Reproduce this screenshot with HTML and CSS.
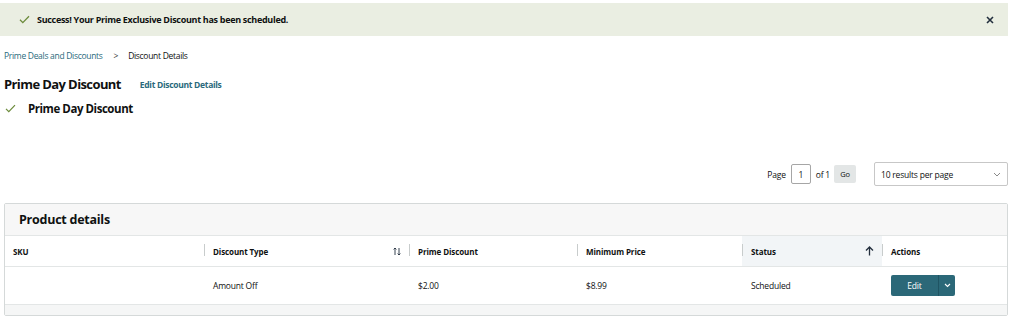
FILE: index.html
```html
<!DOCTYPE html>
<html>
<head>
    <title>Discount Details</title>
    <link rel="stylesheet" href="styles.css">
</head>
<body>
    <div class="alert">
        <svg class="alert-check" width="11" height="9" viewBox="0 0 11 9"><path d="M1 4.8 L3.8 7.6 L10 1.2" fill="none" stroke="#6b8a3a" stroke-width="1.3"/></svg>
        <span class="alert-text">Success! Your Prime Exclusive Discount has been scheduled.</span>
        <svg class="alert-close" width="8" height="8" viewBox="0 0 8 8"><path d="M1 1 L7 7 M7 1 L1 7" stroke="#232f3e" stroke-width="1.6"/></svg>
    </div>

    <div class="page">
        <div class="crumbs">
            <a class="crumb-link">Prime Deals and Discounts</a>
            <span class="crumb-sep">&gt;</span>
            <span>Discount Details</span>
        </div>

        <div class="title-row">
            <h1>Prime Day Discount</h1>
            <a class="edit-link">Edit Discount Details</a>
        </div>

        <div class="sub-row">
            <svg width="11" height="9" viewBox="0 0 11 9"><path d="M1 4.8 L3.8 7.6 L10 1.2" fill="none" stroke="#6b8a3a" stroke-width="1.2"/></svg>
            <span>Prime Day Discount</span>
        </div>

        <div class="pager">
            <span>Page</span>
            <span class="page-box">1</span>
            <span>of 1</span>
            <span class="go-btn">Go</span>
            <div class="per-page">
                <span>10 results per page</span>
                <svg width="8" height="5" viewBox="0 0 8 5"><path d="M1 1 L4 4 L7 1" fill="none" stroke="#8a8a8a" stroke-width="1"/></svg>
            </div>
        </div>

        <div class="card">
            <div class="card-head">Product details</div>
            <div class="grid head-row">
                <div class="cell">SKU</div>
                <div class="cell sep">Discount Type
                    <svg class="sort" width="8" height="9" viewBox="0 0 8 9"><path d="M2 8 V1 M0.6 2.4 L2 1 L3.4 2.4 M6 1 V8 M4.6 6.6 L6 8 L7.4 6.6" fill="none" stroke="#232f3e" stroke-width="0.9"/></svg>
                </div>
                <div class="cell sep">Prime Discount</div>
                <div class="cell sep">Minimum Price</div>
                <div class="cell sep sorted">Status
                    <svg class="sort" width="9" height="10" viewBox="0 0 9 10"><path d="M4.5 9.5 V1 M1 4.5 L4.5 1 L8 4.5" fill="none" stroke="#232f3e" stroke-width="1.3"/></svg>
                </div>
                <div class="cell sep">Actions</div>
            </div>
            <div class="grid body-row">
                <div class="cell"></div>
                <div class="cell">Amount Off</div>
                <div class="cell">$2.00</div>
                <div class="cell">$8.99</div>
                <div class="cell">Scheduled</div>
                <div class="cell">
                    <div class="split-btn">
                        <span class="split-main">Edit</span>
                        <span class="split-arrow">
                            <svg width="7" height="5" viewBox="0 0 7 5"><path d="M1 1 L3.5 3.5 L6 1" fill="none" stroke="#fff" stroke-width="1.1"/></svg>
                        </span>
                    </div>
                </div>
            </div>
            <div class="card-foot"></div>
        </div>
    </div>
</body>
</html>
```

FILE: styles.css
```css
* {
    margin: 0;
    padding: 0;
    box-sizing: border-box;
}

body {
    font-family: "Open Sans", "Noto Sans", sans-serif;
    padding: 3px 4px 0 0;
    background: #fff;
    color: #0f1111;
    font-size: 8.5px;
    letter-spacing: -0.2px;
}

.alert {
    display: flex;
    align-items: center;
    height: 33px;
    padding: 0 14px 0 19px;
    background: #eaeee2;
}

.alert-check {
    margin-right: 7px;
}

.alert-text {
    flex-grow: 1;
    font-weight: 700;
    font-size: 9px;
    letter-spacing: -0.3px;
    color: #0f1111;
}

.page {
    padding-left: 4px;
}

.crumbs {
    display: flex;
    align-items: center;
    height: 20px;
    margin-top: 9px;
    letter-spacing: -0.3px;
}

.crumb-link {
    color: #2a6a7c;
}

.crumb-sep {
    margin: 0 10px 0 11px;
    color: #333;
}

.title-row {
    display: flex;
    align-items: center;
    margin-top: 8px;
    height: 22px;
}

h1 {
    font-size: 13px;
    font-weight: 700;
    letter-spacing: -0.6px;
}

.edit-link {
    margin-left: 19px;
    font-weight: 700;
    letter-spacing: -0.3px;
    color: #2a6a7c;
}

.sub-row {
    display: flex;
    align-items: center;
    height: 18px;
    margin-top: 4px;
    font-size: 11.5px;
    font-weight: 700;
    letter-spacing: -0.45px;
}

.sub-row svg {
    margin: 0 12px 0 1px;
}

.pager {
    display: flex;
    align-items: center;
    justify-content: flex-end;
    margin-top: 45px;
    height: 24px;
}

.page-box {
    display: flex;
    align-items: center;
    justify-content: center;
    width: 20px;
    height: 20px;
    margin: 0 5px;
    border: 1px solid #a6a6a6;
    border-radius: 2px;
}

.go-btn {
    display: flex;
    align-items: center;
    justify-content: center;
    width: 22px;
    height: 18px;
    margin: 0 18px 0 4px;
    background: #e3e6e6;
    border-radius: 2px;
    font-size: 7.5px;
}

.per-page {
    display: flex;
    align-items: center;
    justify-content: space-between;
    width: 134px;
    height: 24px;
    padding: 0 6px 0 6px;
    border: 1px solid #c7c7c7;
    border-radius: 2px;
}

.card {
    margin-top: 17px;
    border: 1px solid #d5d9d9;
    border-radius: 2px;
}

.card-head {
    display: flex;
    align-items: center;
    height: 32px;
    padding-left: 14px;
    background: #f7f7f7;
    font-size: 12.5px;
    font-weight: 700;
    letter-spacing: -0.25px;
    border-bottom: 1px solid #e3e6e6;
}

.grid {
    display: grid;
    grid-template-columns: 199px 205px 168px 165px 140px 1fr;
}

.head-row {
    height: 31px;
    border-bottom: 1px solid #e3e6e6;
    font-weight: 700;
    font-size: 8px;
    letter-spacing: -0.1px;
}

.cell {
    display: flex;
    align-items: center;
    padding-left: 9px;
    position: relative;
}

.head-row .cell:first-child {
    padding-left: 8px;
}

.sep:before {
    content: "";
    position: absolute;
    left: 0;
    top: 8px;
    bottom: 10px;
    width: 1px;
    background: #c8cccc;
}

.sorted {
    background: #f2f5f7;
}

.sort {
    margin-left: auto;
    margin-right: 8px;
}

.body-row {
    height: 38px;
    border-bottom: 1px solid #e3e6e6;
}

.split-btn {
    display: flex;
    height: 21px;
    width: 64px;
    background: #2b6878;
    border-radius: 2px;
    color: #fff;
}

.split-main {
    display: flex;
    align-items: center;
    justify-content: center;
    width: 48px;
    border-right: 1px solid #1f5463;
}

.split-arrow {
    display: flex;
    align-items: center;
    justify-content: center;
    flex-grow: 1;
}

.card-foot {
    height: 10px;
    background: #f5f6f6;
}
```
